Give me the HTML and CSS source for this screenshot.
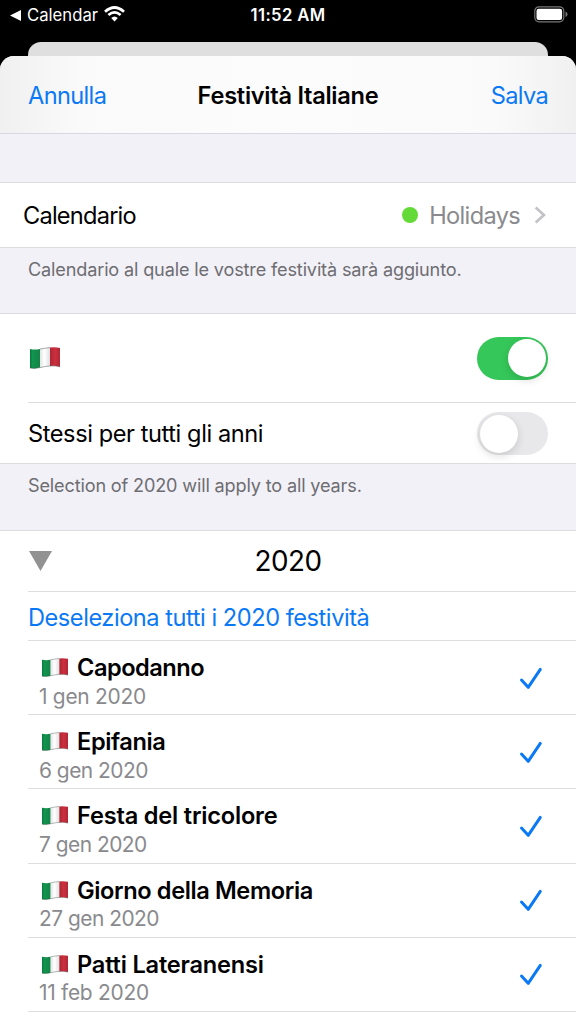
FILE: index.html
```html
<!DOCTYPE html>
<html lang="it">
<head>
<meta charset="utf-8">
<title>Festività Italiane</title>
<link rel="stylesheet" href="styles.css">
</head>
<body>
<svg class="defs" width="0" height="0" aria-hidden="true">
  <defs>
    <linearGradient id="g-green" x1="0" x2="1"><stop offset="0" stop-color="#087a3b"/><stop offset=".25" stop-color="#129450"/><stop offset="1" stop-color="#138347"/></linearGradient>
    <linearGradient id="g-white" x1="0" x2="1"><stop offset="0" stop-color="#e4e4e4"/><stop offset=".45" stop-color="#ffffff"/><stop offset="1" stop-color="#dedfe1"/></linearGradient>
    <linearGradient id="g-red" x1="0" x2="1"><stop offset="0" stop-color="#ac2634"/><stop offset=".5" stop-color="#cb303f"/><stop offset="1" stop-color="#b32636"/></linearGradient>
    <symbol id="flag" viewBox="0 0 30 22" preserveAspectRatio="none">
      <path d="M0 2Q5 3 10 2V20.600Q5 22 0 21Z" fill="url(#g-green)"/>
      <path d="M10 2Q15 1.200 20 .5V19Q15 19.600 10 20.600Z" fill="url(#g-white)"/>
      <path d="M20 .5Q25 -.3 30 1V19.800Q25 18.500 20 19Z" fill="url(#g-red)"/>
      <path d="M0 21Q5 22 10 20.600T20 19Q25 18.500 30 19.800M10 2Q15 1.200 20 .5" fill="none" stroke="#3b4440" stroke-opacity=".55" stroke-width=".8"/>
    </symbol>
    <symbol id="check" viewBox="0 0 24 24"><path d="M2.500 13L9.200 20.300L21.300 2.400" fill="none" stroke="#0b79f5" stroke-width="3" stroke-linecap="round" stroke-linejoin="round"/></symbol>
  </defs>
</svg>
<header class="status">
  <div class="status-left">
    <svg class="back" viewBox="0 0 11 11"><path d="M0 5.500L11 0V11Z" fill="#fff"/></svg>
    <span class="back-label">Calendar</span>
    <svg class="wifi" viewBox="0 0 21 16"><g fill="none" stroke="#fff" stroke-width="2.700"><path d="M1 5.700Q10.500 -2.700 20 5.700"/><path d="M4.400 9.100Q10.500 3.700 16.600 9.100"/></g><path d="M7.200 12Q10.500 9 13.800 12L10.500 15.500Z" fill="#fff"/></svg>
  </div>
  <span class="time">11:52 AM</span>
  <div class="status-right"><svg class="battery" viewBox="0 0 34 17"><rect x=".8" y=".8" width="29" height="15" rx="4.200" fill="none" stroke="#777" stroke-width="1.200"/><rect x="2.500" y="2.700" width="25.600" height="11.200" rx="2.200" fill="#fff"/><path d="M31.500 5.500Q33.500 6.300 33.500 8.300T31.500 11Z" fill="#777"/></svg></div>
</header>
<div class="back-sheet"></div>
<main class="sheet">
  <nav class="nav">
    <a class="action cancel">Annulla</a>
    <h1 class="title">Festività Italiane</h1>
    <a class="action save">Salva</a>
  </nav>
  <section class="group calendar-group">
    <div class="row calendar-row">
      <span class="label calendar-label">Calendario</span>
      <div class="value"><i class="dot"></i><span class="value-text">Holidays</span><svg class="chevron" viewBox="0 0 12 18"><path d="M1.700 1.600L9.900 9L1.700 16.400" fill="none" stroke="#c3c3c7" stroke-width="2.700"/></svg></div>
    </div>
  </section>
  <p class="note note-calendar">Calendario al quale le vostre festività sarà aggiunto.</p>
  <section class="group">
    <div class="row flag-row"><svg class="flag-large"><use href="#flag"/></svg><i class="switch on"></i></div>
    <div class="row years-row inset"><span class="label years-label">Stessi per tutti gli anni</span><i class="switch"></i></div>
  </section>
  <p class="note note-years">Selection of 2020 will apply to all years.</p>
  <section class="group list">
    <div class="row year-row"><svg class="triangle" viewBox="0 0 23 20"><path d="M0 0H23L11.500 20Z" fill="#929292"/></svg><h2 class="year">2020</h2></div>
    <div class="row all-row inset"><a class="action all">Deseleziona tutti i 2020 festività</a></div>
    <div class="row holiday inset"><div class="info"><div class="name"><svg class="flag"><use href="#flag"/></svg><span>Capodanno</span></div><span class="date date-spaced">1 gen 2020</span></div><svg class="check"><use href="#check"/></svg></div>
    <div class="row holiday inset"><div class="info"><div class="name"><svg class="flag"><use href="#flag"/></svg><span class="medium">Epifania</span></div><span class="date">6 gen 2020</span></div><svg class="check"><use href="#check"/></svg></div>
    <div class="row holiday inset"><div class="info"><div class="name"><svg class="flag"><use href="#flag"/></svg><span class="loose">Festa del tricolore</span></div><span class="date">7 gen 2020</span></div><svg class="check"><use href="#check"/></svg></div>
    <div class="row holiday inset"><div class="info"><div class="name"><svg class="flag"><use href="#flag"/></svg><span class="medium">Giorno della Memoria</span></div><span class="date">27 gen 2020</span></div><svg class="check"><use href="#check"/></svg></div>
    <div class="row holiday inset"><div class="info"><div class="name"><svg class="flag"><use href="#flag"/></svg><span class="loose">Patti Lateranensi</span></div><span class="date date-spaced">11 feb 2020</span></div><svg class="check"><use href="#check"/></svg></div>
    <div class="row end inset"></div>
  </section>
</main>
</body>
</html>
```
FILE: styles.css
```css
* { box-sizing: border-box; }
body { margin: 0; width: 576px; height: 1024px; overflow: hidden; background: #000; color: #000; font-family: Inter, "Liberation Sans", sans-serif; font-size: 23.6px; letter-spacing: -0.5px; }
svg { display: block; flex: none; }
.defs { position: absolute; }
h1, h2, p { margin: 0; font-weight: 400; }
.status { height: 42px; padding: 0 8px 12px 10px; display: grid; grid-template-columns: 1fr auto 1fr; align-items: center; color: #fff; font-size: 16.7px; letter-spacing: 0; }
.status-left { display: flex; align-items: center; }
.back { width: 11px; height: 11px; margin-right: 6px; }
.wifi { width: 21px; height: 16px; margin-left: 6px; margin-top: -2px; }
.time { font-weight: 600; letter-spacing: 0.35px; margin-right: 2px; }
.status-right { display: flex; justify-content: flex-end; }
.battery { width: 34px; height: 17px; margin-top: -2px; }
.back-sheet { height: 14px; margin: 0 28px; background: #dfdfdf; border-radius: 13px 13px 0 0; }
.sheet { height: 968px; border-radius: 14px 14px 0 0; background: #f2f1f7; overflow: hidden; }
.nav { height: 78px; padding: 2px 28px 0; display: grid; grid-template-columns: 1fr auto 1fr; align-items: center; border-bottom: 1px solid #d9d8de; background: linear-gradient(90deg, #f0f0f0, #fafafa 14%, #fcfcfc 50%, #fafafa 86%, #f0f0f0); }
.action { color: #0b79f5; white-space: nowrap; }
.cancel, .save { letter-spacing: -0.65px; }
.save { text-align: right; }
.title { font-size: 23.6px; font-weight: 600; letter-spacing: -0.27px; }
.group { background: #fff; border-top: 1px solid #dcdbe0; border-bottom: 1px solid #dcdbe0; }
.calendar-group { margin-top: 48px; }
.row { position: relative; display: flex; align-items: center; justify-content: space-between; padding: 0 28px; }
.inset::before { content: ""; position: absolute; left: 28px; right: 0; top: 0; height: 1px; background: #dedee1; }
.calendar-row { height: 64px; padding: 0 30px 0 23px; }
.calendar-label { letter-spacing: -0.78px; }
.value { display: flex; align-items: center; color: #8a8a8e; }
.value-text { letter-spacing: -0.68px; }
.dot { width: 16px; height: 16px; border-radius: 50%; background: #64da38; margin-right: 11px; }
.chevron { width: 12px; height: 18px; margin-left: 14px; }
.note { height: 66px; padding: 9px 28px 0; font-size: 18.1px; line-height: 24px; color: #6d6d72; letter-spacing: -0.15px; white-space: nowrap; }
.note-calendar { height: 65px; }
.flag-row { height: 88px; }
.years-row { height: 61px; padding-top: 2px; }
.years-label { letter-spacing: -0.42px; }
.flag-large { width: 30px; height: 22px; margin-left: 2px; }
.switch { position: relative; width: 71px; height: 43px; border-radius: 22px; background: #e8e8ea; }
.switch::after { content: ""; position: absolute; left: 3px; top: 2.5px; width: 38px; height: 38px; border-radius: 50%; background: #fff; box-shadow: 0 3px 8px rgba(0,0,0,.14); }
.switch.on { background: #35c759; }
.switch.on::after { left: 30.5px; }
.year-row { height: 60px; display: grid; grid-template-columns: 1fr auto 1fr; }
.triangle { width: 23px; height: 20px; margin-left: 1px; }
.year { font-size: 27.8px; }
.all-row { height: 49px; padding-top: 3px; }
.all { letter-spacing: -0.46px; }
.holiday { height: 74.2px; padding: 3px 33px 0 39px; }
.info { display: flex; flex-direction: column; padding-top: 4px; }
.name { display: flex; align-items: center; height: 30px; font-weight: 600; }
.medium { letter-spacing: -0.39px; }
.loose { letter-spacing: -0.2px; }
.flag { width: 26px; height: 19px; margin: 0 9px 0 3px; }
.date { height: 26px; line-height: 28px; font-size: 20.9px; color: #8a8a8e; }
.date-spaced { letter-spacing: -0.26px; }
.check { width: 24px; height: 24px; }
.end { height: 14px; }
```
